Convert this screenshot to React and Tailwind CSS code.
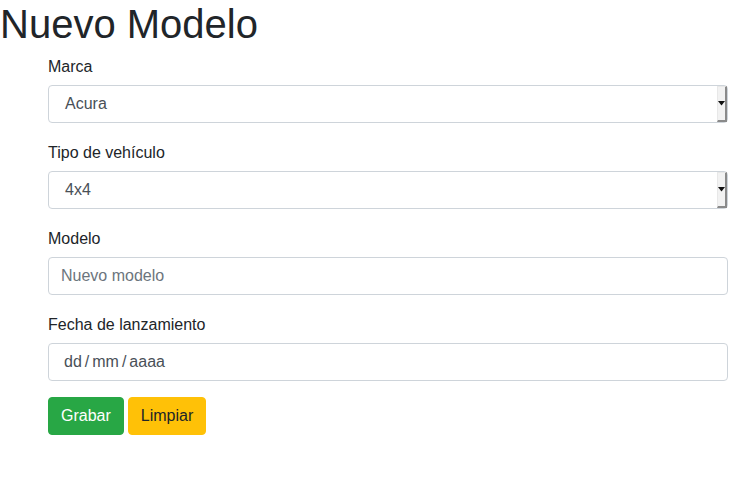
export default function App() {
  const font = { fontFamily: '"Liberation Sans", Arial, sans-serif' };

  const SelectBox = ({ value }) => (
    <div className="relative flex h-[38px] w-full items-center rounded border border-[#ced4da] bg-white pl-4 text-base text-[#495057]">
      <span>{value}</span>
      <div className="absolute right-0 top-0 flex h-[36px] w-[10px] items-center justify-center border-b-2 border-r-2 border-l border-t border-b-[#8a8a8a] border-r-[#8a8a8a] border-l-[#e8e8e8] border-t-[#e8e8e8] bg-[#f2f2f2]">
        <svg width="7" height="5" viewBox="0 0 7 5">
          <path d="M0 0 H7 L3.5 4.5 Z" fill="#111" />
        </svg>
      </div>
    </div>
  );

  return (
    <div className="min-h-[485px] bg-white text-[#212529]" style={font}>
      <h1 className="mb-[7px] h-[48px] text-[40px] font-medium leading-[48px]">Nuevo Modelo</h1>
      <form className="ml-12 w-[680px]" onSubmit={(e) => e.preventDefault()}>
        <div className="mb-[18px]">
          <label className="mb-[6px] block text-base leading-6">Marca</label>
          <SelectBox value="Acura" />
        </div>
        <div className="mb-[18px]">
          <label className="mb-[6px] block text-base leading-6">Tipo de vehículo</label>
          <SelectBox value="4x4" />
        </div>
        <div className="mb-[18px]">
          <label className="mb-[6px] block text-base leading-6">Modelo</label>
          <input
            type="text"
            placeholder="Nuevo modelo"
            className="block h-[38px] w-full rounded border border-[#ced4da] px-3 text-base text-[#495057] outline-none placeholder:text-[#6c757d]"
          />
        </div>
        <div className="mb-4">
          <label className="mb-[6px] block text-base leading-6">Fecha de lanzamiento</label>
          <div className="flex h-[38px] w-full items-center rounded border border-[#ced4da] pl-[15px] text-base text-[#495057]">
            dd<span className="mx-[3px]">/</span>mm<span className="mx-[3px]">/</span>aaaa
          </div>
        </div>
        <div className="flex gap-1">
          <button type="submit" className="h-[38px] rounded border border-[#28a745] bg-[#28a745] px-3 text-base text-white">
            Grabar
          </button>
          <button type="button" className="h-[38px] rounded border border-[#ffc107] bg-[#ffc107] px-3 text-base text-[#212529]">
            Limpiar
          </button>
        </div>
      </form>
    </div>
  );
}
